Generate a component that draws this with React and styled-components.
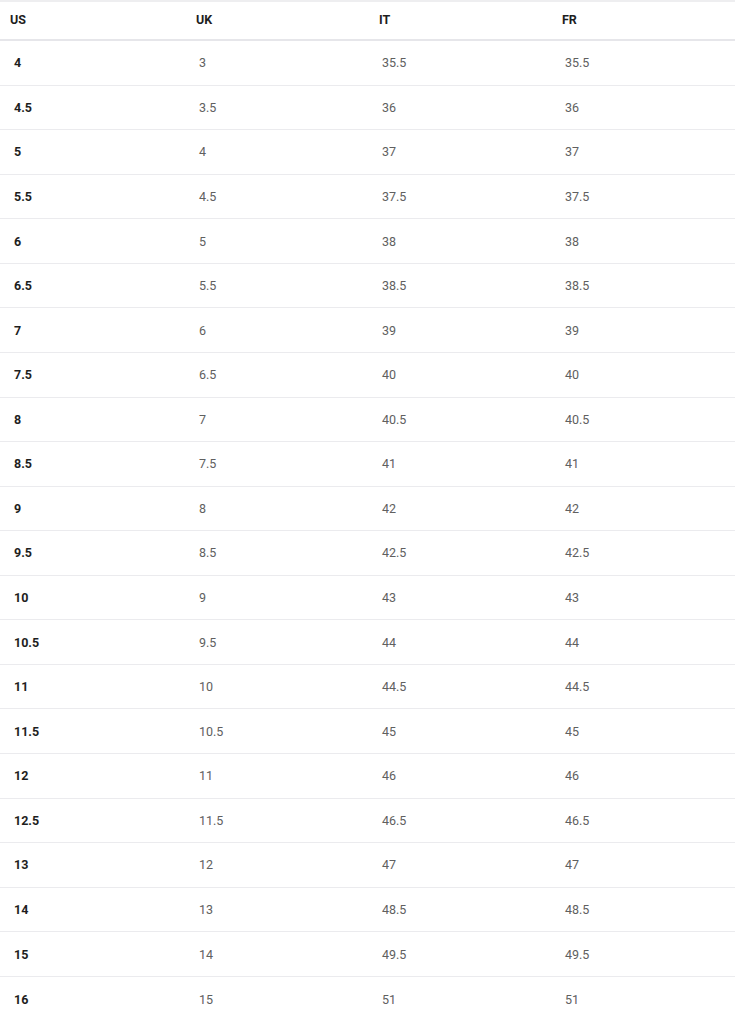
import React from 'react'
import styled, { createGlobalStyle } from 'styled-components'

const GlobalStyle = createGlobalStyle`
  body {
    margin: 0;
    background: #ffffff;
    font-family: Roboto, "Noto Sans", sans-serif;
  }
`

const sizes = [
  ['4', '3', '35.5', '35.5'],
  ['4.5', '3.5', '36', '36'],
  ['5', '4', '37', '37'],
  ['5.5', '4.5', '37.5', '37.5'],
  ['6', '5', '38', '38'],
  ['6.5', '5.5', '38.5', '38.5'],
  ['7', '6', '39', '39'],
  ['7.5', '6.5', '40', '40'],
  ['8', '7', '40.5', '40.5'],
  ['8.5', '7.5', '41', '41'],
  ['9', '8', '42', '42'],
  ['9.5', '8.5', '42.5', '42.5'],
  ['10', '9', '43', '43'],
  ['10.5', '9.5', '44', '44'],
  ['11', '10', '44.5', '44.5'],
  ['11.5', '10.5', '45', '45'],
  ['12', '11', '46', '46'],
  ['12.5', '11.5', '46.5', '46.5'],
  ['13', '12', '47', '47'],
  ['14', '13', '48.5', '48.5'],
  ['15', '14', '49.5', '49.5'],
  ['16', '15', '51', '51'],
]

const Table = styled.div`
  width: 735px;
  border-top: 2px solid #eeeef0;
`

const Row = styled.div`
  display: grid;
  grid-template-columns: 186px 183px 183px 1fr;
  align-items: center;
  box-sizing: border-box;
  height: ${({ $head }) => ($head ? '39px' : '44.57px')};
  border-bottom: ${({ $head, $last }) =>
    $last ? 'none' : $head ? '2px solid #e6e6ea' : '1px solid #ebebee'};
`

const HeadCell = styled.div`
  padding-left: 10px;
  font-size: 12.5px;
  font-weight: 700;
  color: #1e1e1e;
  padding-bottom: 2px;
`

const Cell = styled.div`
  padding-left: ${({ $first }) => ($first ? '14px' : '13px')};
  font-size: 12.5px;
  font-weight: ${({ $first }) => ($first ? 700 : 400)};
  color: ${({ $first }) => ($first ? '#1e1e1e' : '#606060')};
`

const App = () => {
  return (
    <>
      <GlobalStyle />
      <Table>
        <Row $head>
          <HeadCell>US</HeadCell>
          <HeadCell>UK</HeadCell>
          <HeadCell>IT</HeadCell>
          <HeadCell>FR</HeadCell>
        </Row>
        {sizes.map((row, i) => (
          <Row key={row[0]} $last={i === sizes.length - 1}>
            {row.map((v, j) => (
              <Cell key={j} $first={j === 0}>{v}</Cell>
            ))}
          </Row>
        ))}
      </Table>
    </>
  )
}

export default App
